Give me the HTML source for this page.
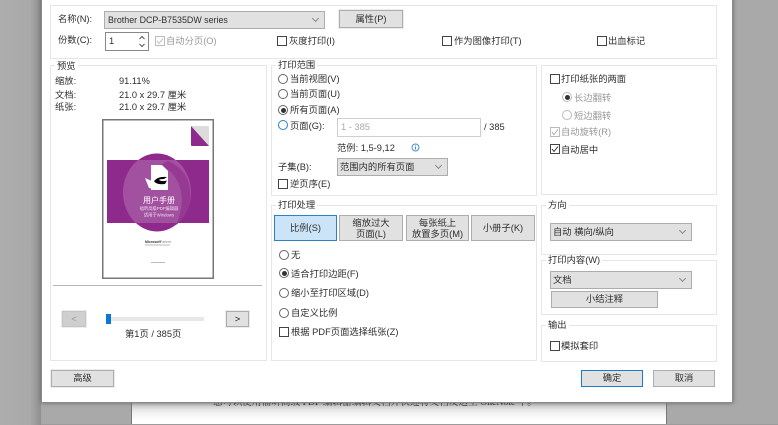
<!DOCTYPE html>
<html lang="zh">
<head>
<meta charset="utf-8">
<style>
html,body{margin:0;padding:0;width:778px;height:425px;overflow:hidden;background:#a9a9a9}
body{position:relative;font-family:"Liberation Sans","Noto Sans CJK SC",sans-serif;font-size:9.3px;color:#2e2e2e}
div,span,svg{position:absolute;box-sizing:border-box}
body>*{filter:blur(.25px)}
.t{white-space:nowrap;line-height:12px;height:12px}
.g{color:#999}
.p{border:1px solid #e6e6e6;background:#fff}
.l{background:#fff;padding:0 2px;white-space:nowrap;line-height:11px;height:11px}
.b{background:#e1e1e1;border:1px solid #adadad;text-align:center;white-space:nowrap;outline:1px solid #ececec}
.c{width:10px;height:10px;border:1px solid #444;background:#fff}
.r{width:10px;height:10px;border:1px solid #666;border-radius:50%;background:#fff}
.r.on:after{content:"";position:absolute;left:1.5px;top:1.5px;width:5px;height:5px;border-radius:50%;background:#333}
.s{background:#e1e1e1;border:1px solid #adadad;white-space:nowrap;padding-left:2px}
.s:after{content:"";position:absolute;right:6px;top:4px;width:4px;height:4px;border-right:1px solid #888;border-bottom:1px solid #888;transform:rotate(45deg)}
</style>
</head>
<body>
<!-- background page -->
<div style="left:132px;top:403px;width:534px;height:21px;background:linear-gradient(#c4c4c4,#efefef 9px,#fff 17px)"></div>
<div style="left:131px;top:403px;width:1px;height:21px;background:#777"></div>
<div style="left:666px;top:403px;width:1px;height:21px;background:#777"></div>
<div style="left:0;top:424px;width:778px;height:1px;background:#9c9c9c"></div>
<div class="t" style="left:213px;top:397px;font-family:'Liberation Serif','Noto Serif CJK SC',serif;font-size:9.7px;color:#111">您可以使用福昕高级 PDF 编辑器编辑文档并快速将文档发送至 OneNote 中。</div>
<div style="left:0;top:0;width:41px;height:425px;background:linear-gradient(90deg,#adadad,#a9a9a9 30px,#8f8f8f)"></div>
<!-- dialog -->
<div style="left:41px;top:-5px;width:692px;height:408px;background:#fff;border:1px solid #8a8a8a;box-shadow:0 0 4px #666"></div>

<!-- top panel -->
<div class="p" style="left:50px;top:5px;width:667px;height:54px"></div>
<div class="t" style="left:58px;top:13px">名称(N):</div>
<div class="s" style="left:104px;top:11px;width:221px;height:18px;line-height:16px;font-size:8.9px;padding-left:3px">Brother DCP-B7535DW series</div>
<div class="b" style="left:339px;top:10px;width:64px;height:18px;line-height:16px">属性(P)</div>
<div class="t" style="left:58px;top:34px">份数(C):</div>
<div style="left:105px;top:32px;width:44px;height:19px;border:1px solid #888;background:#fff;padding:1px 3px;line-height:14px">1</div>
<svg style="left:137px;top:34px" width="10" height="15" viewBox="0 0 10 15"><path d="M2.5 5L5 2.5L7.5 5M2.5 10L5 12.5L7.5 10" fill="none" stroke="#555"/></svg>
<div class="c" style="left:155px;top:36px;border-color:#bbb"></div>
<svg style="left:156px;top:37px" width="8" height="8"><path d="M1 4L3 6.5L7 1.5" fill="none" stroke="#bbb"/></svg>
<div class="t g" style="left:166px;top:35px">自动分页(O)</div>
<div class="c" style="left:277px;top:36px"></div>
<div class="t" style="left:289px;top:35px">灰度打印(I)</div>
<div class="c" style="left:442px;top:36px"></div>
<div class="t" style="left:454px;top:35px">作为图像打印(T)</div>
<div class="c" style="left:597px;top:36px"></div>
<div class="t" style="left:608px;top:35px">出血标记</div>

<!-- preview panel -->
<div class="p" style="left:50px;top:65px;width:217px;height:296px"></div>
<div class="l" style="left:55px;top:61px">预览</div>
<div class="t" style="left:55px;top:75px">缩放:</div>
<div class="t" style="left:119px;top:75px">91.11%</div>
<div class="t" style="left:55px;top:89px">文档:</div>
<div class="t" style="left:119px;top:89px">21.0 x 29.7 厘米</div>
<div class="t" style="left:55px;top:101px">纸张:</div>
<div class="t" style="left:119px;top:101px">21.0 x 29.7 厘米</div>

<!-- thumbnail -->
<svg style="left:102px;top:119px" width="112" height="160" viewBox="0 0 112 160">
<rect x=".75" y=".75" width="110.5" height="158.5" fill="#fff" stroke="#777" stroke-width="1.5"/>
<rect x="89" y="7" width="18" height="20" rx="1" fill="#dcdcdc"/>
<path d="M89 7L107 27H90a1 1 0 0 1-1-1z" fill="#8e2a8b"/>
<ellipse cx="55" cy="73.5" rx="34" ry="39" fill="#8e2a8b"/>
<rect x="5" y="41" width="102" height="63" fill="#8e2a8b"/>
<clipPath id="band"><rect x="5" y="41" width="102" height="63"/></clipPath>
<ellipse cx="55" cy="73.5" rx="34" ry="39" fill="#a251a1" clip-path="url(#band)"/>
<path d="M66 42Q90 52 88 80Q86 98 74 106Q84 84 77 66Q72 52 58 46z" fill="#8e2a8b" opacity=".6"/>
<path d="M49 46H60L66 52V71H49z" fill="#fff"/>
<path d="M43 59L52 63L57 71L47 69z" fill="#fff"/>
<path d="M52 62Q56 57 65 58L62 60Q57 60 57 61Q60 63 65 61.500L63 65Q54 66 52 62z" fill="#000"/>
<text x="57" y="84" font-size="8" fill="#fff" text-anchor="middle">用户手册</text>
<text x="57" y="91" font-size="4.3" fill="#eedcee" text-anchor="middle">福昕高级PDF编辑器</text>
<text x="57" y="97.500" font-size="4.3" fill="#eedcee" text-anchor="middle">适用于Windows</text>
<text x="43" y="124" font-size="3.500" font-weight="bold" fill="#333">Microsoft</text>
<text x="58" y="124" font-size="3.500" fill="#888">Partner</text>
<rect x="43" y="125.500" width="25" height="1" fill="#bbb"/>
<rect x="49" y="143" width="14" height="1" fill="#bbb"/>
</svg>

<div style="left:53px;top:285px;width:209px;height:1px;background:#b5b5b5"></div>
<div class="b" style="left:62px;top:311px;width:24px;height:16px;background:#cfcfcf;border-color:#c4c4c4;color:#999;line-height:14px">&lt;</div>
<div style="left:106px;top:317px;width:98px;height:4px;background:#e7e7e7"></div>
<div style="left:106px;top:314px;width:5px;height:10px;background:#0a78d7"></div>
<div class="b" style="left:226px;top:311px;width:23px;height:16px;line-height:14px;color:#111">&gt;</div>
<div class="t" style="left:125px;top:328px">第1页 / 385页</div>
<div class="b" style="left:51px;top:370px;width:63px;height:17px;line-height:15px">高级</div>

<!-- print range -->
<div class="p" style="left:271px;top:65px;width:266px;height:131px"></div>
<div class="l" style="left:276px;top:60px">打印范围</div>
<div class="r" style="left:278px;top:74px"></div>
<div class="t" style="left:290px;top:73px">当前视图(V)</div>
<div class="r" style="left:278px;top:89px"></div>
<div class="t" style="left:290px;top:88px">当前页面(U)</div>
<div class="r on" style="left:278px;top:105px"></div>
<div class="t" style="left:290px;top:104px">所有页面(A)</div>
<div class="r" style="left:278px;top:120px;border-color:#2a82c8"></div>
<div class="t" style="left:290px;top:120px">页面(G):</div>
<div style="left:337px;top:118px;width:144px;height:19px;border:1px solid #cfcfcf;background:#fff;padding:0 3px;line-height:17px;color:#aaa">1 - 385</div>
<div class="t" style="left:484px;top:121px">/ 385</div>
<div class="t" style="left:337px;top:142px">范例: 1,5-9,12</div>
<svg style="left:411px;top:143px" width="9" height="9"><circle cx="4.500" cy="4.500" r="3.500" fill="none" stroke="#4a90c8"/><path d="M4.500 2.500V3.500M4.500 4V6.500" stroke="#4a90c8"/></svg>
<div class="t" style="left:278px;top:161px">子集(B):</div>
<div class="s" style="left:337px;top:158px;width:111px;height:18px;line-height:16px">范围内的所有页面</div>
<div class="c" style="left:278px;top:179px"></div>
<div class="t" style="left:290px;top:178px">逆页序(E)</div>

<!-- print handling -->
<div class="p" style="left:271px;top:205px;width:266px;height:156px"></div>
<div class="l" style="left:276px;top:200px">打印处理</div>
<div class="b" style="left:274px;top:215px;width:63px;height:26px;background:#cce4f7;border-color:#2a82c8;line-height:24px;outline:none">比例(S)</div>
<div class="b" style="left:339px;top:215px;width:64px;height:26px;line-height:11px;padding-top:2px;outline:none">缩放过大<br>页面(L)</div>
<div class="b" style="left:406px;top:215px;width:63px;height:26px;line-height:11px;padding-top:2px;outline:none">每张纸上<br>放置多页(M)</div>
<div class="b" style="left:471px;top:215px;width:64px;height:26px;line-height:24px;outline:none">小册子(K)</div>
<div class="r" style="left:279px;top:250px"></div>
<div class="t" style="left:291px;top:249px">无</div>
<div class="r on" style="left:279px;top:268px"></div>
<div class="t" style="left:291px;top:268px">适合打印边距(F)</div>
<div class="r" style="left:279px;top:288px"></div>
<div class="t" style="left:291px;top:287px">缩小至打印区域(D)</div>
<div class="r" style="left:279px;top:308px"></div>
<div class="t" style="left:291px;top:307px">自定义比例</div>
<div class="c" style="left:279px;top:327px"></div>
<div class="t" style="left:291px;top:326px">根据 PDF页面选择纸张(Z)</div>

<!-- duplex -->
<div class="p" style="left:541px;top:65px;width:176px;height:130px"></div>
<div class="c" style="left:550px;top:74px"></div>
<div class="t" style="left:561px;top:73px">打印纸张的两面</div>
<div class="r on" style="left:562px;top:92px;border-color:#bbb"></div>
<div class="t g" style="left:574px;top:92px">长边翻转</div>
<div class="r" style="left:562px;top:110px;border-color:#bbb"></div>
<div class="t g" style="left:574px;top:110px">短边翻转</div>
<div class="c" style="left:550px;top:127px;border-color:#bbb"></div>
<svg style="left:551px;top:128px" width="8" height="8"><path d="M1 4L3 6.500L7 1.500" fill="none" stroke="#aaa"/></svg>
<div class="t g" style="left:561px;top:126px">自动旋转(R)</div>
<div class="c" style="left:550px;top:144px"></div>
<svg style="left:551px;top:145px" width="8" height="8"><path d="M1 4L3 6.500L7 1.500" fill="none" stroke="#333"/></svg>
<div class="t" style="left:561px;top:144px">自动居中</div>

<!-- direction -->
<div class="p" style="left:541px;top:205px;width:176px;height:50px"></div>
<div class="l" style="left:546px;top:200px">方向</div>
<div class="s" style="left:550px;top:223px;width:142px;height:18px;line-height:16px">自动 横向/纵向</div>

<!-- content -->
<div class="p" style="left:541px;top:260px;width:176px;height:55px"></div>
<div class="l" style="left:546px;top:255px">打印内容(W)</div>
<div class="s" style="left:550px;top:271px;width:142px;height:18px;line-height:16px">文档</div>
<div class="b" style="left:551px;top:291px;width:107px;height:17px;line-height:15px;outline:none">小结注释</div>

<!-- output -->
<div class="p" style="left:541px;top:325px;width:176px;height:37px"></div>
<div class="l" style="left:546px;top:320px">输出</div>
<div class="c" style="left:550px;top:341px"></div>
<div class="t" style="left:561px;top:340px">模拟套印</div>

<div class="b" style="left:581px;top:370px;width:62px;height:17px;line-height:14px;border:1.5px solid #1a7ad0;outline:none">确定</div>
<div class="b" style="left:653px;top:370px;width:62px;height:17px;line-height:15px;outline:none">取消</div>
</body>
</html>
